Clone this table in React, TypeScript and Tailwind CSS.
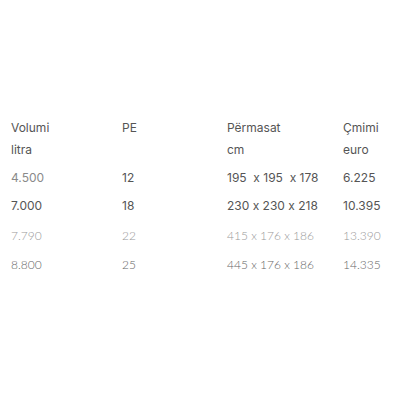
export default function App() {
  const rows = [
    { v: "4.500", pe: "12", d: "195  x 195  x 178", p: "6.225", cls: "text-[#8a8a8a]", pc: "text-[#555]", font: "font-['Inter']", h: "h-[28px]" },
    { v: "7.000", pe: "18", d: "230 x 230 x 218", p: "10.395", cls: "text-[#555]", pc: "text-[#555]", font: "font-['Inter']", h: "h-[30px]" },
    { v: "7.790", pe: "22", d: "415 x 176 x 186", p: "13.390", cls: "text-[#999]", pc: "text-[#999]", font: "font-['Lato'] font-light", h: "h-[29px]" },
    { v: "8.800", pe: "25", d: "445 x 176 x 186", p: "14.335", cls: "text-[#666]", pc: "text-[#666]", font: "font-['Lato'] font-light", h: "h-[29px]" },
  ];
  return (
    <div className="w-[400px] h-[400px] bg-white pt-[119px] pl-[11px] text-[12px] font-['Inter',sans-serif] text-[#555] [font-feature-settings:'calt'_0]">
      <div className="grid grid-cols-[111px_105px_116px_1fr]">
        <div className="h-[22px] leading-[18px]">Volumi</div>
        <div className="h-[22px] leading-[18px]">PE</div>
        <div className="h-[22px] leading-[18px]">Përmasat</div>
        <div className="h-[22px] leading-[18px]">Çmimi</div>
        <div className="h-[28px] leading-[18px]">litra</div>
        <div className="h-[28px]"></div>
        <div className="h-[28px] leading-[18px]">cm</div>
        <div className="h-[28px] leading-[18px]">euro</div>
        {rows.map((r) => [
          <div key={r.v + "a"} className={`${r.h} leading-[18px] ${r.cls} ${r.font}`}>{r.v}</div>,
          <div key={r.v + "b"} className={`${r.h} leading-[18px] ${r.pc} ${r.font}`}>{r.pe}</div>,
          <div key={r.v + "c"} className={`${r.h} leading-[18px] whitespace-pre ${r.pc} ${r.font}`}>{r.d}</div>,
          <div key={r.v + "d"} className={`${r.h} leading-[18px] ${r.pc} ${r.font}`}>{r.p}</div>,
        ])}
      </div>
    </div>
  );
}
